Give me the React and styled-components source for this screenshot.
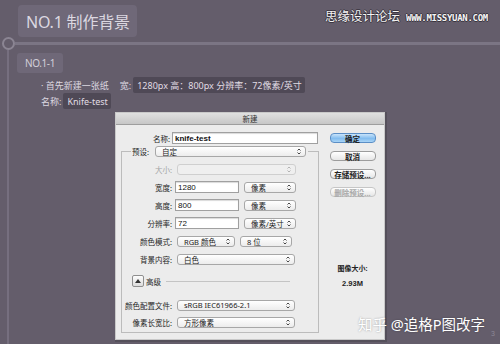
import React from 'react'
import styled, { createGlobalStyle } from 'styled-components'

const GlobalStyle = createGlobalStyle`
    html, body {
        margin: 0;
        padding: 0;
        background: #645d6b;
    }
    * {
        box-sizing: border-box;
    }
`

const CJK = `"Noto Sans", "Noto Sans CJK SC", sans-serif`

function Arrows() {
    return (
        <svg width="4" height="7" viewBox="0 0 4 7">
            <path d="M0.5 2.5 L2 1 L3.5 2.5" fill="none" stroke="#333" strokeWidth="0.9" />
            <path d="M0.5 4.5 L2 6 L3.5 4.5" fill="none" stroke="#333" strokeWidth="0.9" />
        </svg>
    )
}

function Select({ width, disabled, children }) {
    return (
        <SelectBox $width={width} $disabled={disabled}>
            <span>{children}</span>
            <Arrows />
        </SelectBox>
    )
}

function Row({ label, disabled, children }) {
    return (
        <FieldRow>
            <Label $disabled={disabled}>{label}</Label>
            {children}
        </FieldRow>
    )
}

function App() {
    return (
        <Page>
            <GlobalStyle />
            <Header>
                <TitleBox>NO.1&nbsp;制作背景</TitleBox>
                <SiteMark>
                    <span>思缘设计论坛</span>
                    <small>WWW.MISSYUAN.COM</small>
                </SiteMark>
            </Header>
            <Timeline>
                <Dot />
                <TimeLine />
            </Timeline>
            <Section>
                <SubBox>NO.1-1</SubBox>
                <TextLine>
                    · 首先新建一张纸<Key>宽:</Key>
                    <Chip>1280px 高：800px 分辨率：72像素/英寸</Chip>
                </TextLine>
                <TextLine>
                    名称:<Chip>Knife-test</Chip>
                </TextLine>

                <Dialog>
                    <TitleBar>新建</TitleBar>
                    <DialogBody>
                        <LeftCol>
                            <NameRow>
                                <NameLabel>名称:</NameLabel>
                                <Input $width={146} $bold>knife-test</Input>
                            </NameRow>
                            <FieldSet>
                                <Legend>
                                    <LegendLabel>预设:</LegendLabel>
                                    <Select width={151}>自定</Select>
                                </Legend>
                                <Rows>
                                    <Row label="大小:" disabled>
                                        <Select width={119} disabled></Select>
                                    </Row>
                                    <Row label="宽度:">
                                        <Input $width={64}>1280</Input>
                                        <Select width={52}>像素</Select>
                                    </Row>
                                    <Row label="高度:">
                                        <Input $width={64}>800</Input>
                                        <Select width={52}>像素</Select>
                                    </Row>
                                    <Row label="分辨率:">
                                        <Input $width={64}>72</Input>
                                        <Select width={52}>像素/英寸</Select>
                                    </Row>
                                    <Row label="颜色模式:">
                                        <Select width={58}>RGB 颜色</Select>
                                        <Select width={52}>8 位</Select>
                                    </Row>
                                    <Row label="背景内容:">
                                        <Select width={118}>白色</Select>
                                    </Row>
                                </Rows>
                                <Advanced>
                                    <Toggle>
                                        <svg width="6" height="4" viewBox="0 0 6 4">
                                            <path d="M0 4 L3 0 L6 4 Z" fill="#333" />
                                        </svg>
                                    </Toggle>
                                    <span>高级</span>
                                    <Rule />
                                </Advanced>
                                <Rows $gap={5}>
                                    <Row label="颜色配置文件:">
                                        <Select width={118}>sRGB IEC61966-2.1</Select>
                                    </Row>
                                    <Row label="像素长宽比:">
                                        <Select width={118}>方形像素</Select>
                                    </Row>
                                </Rows>
                            </FieldSet>
                        </LeftCol>
                        <RightCol>
                            <Button $primary>确定</Button>
                            <Button>取消</Button>
                            <Button>存储预设...</Button>
                            <Button $disabled>删除预设...</Button>
                            <SizeInfo>
                                <div>图像大小:</div>
                                <strong>2.93M</strong>
                            </SizeInfo>
                        </RightCol>
                    </DialogBody>
                </Dialog>
            </Section>
            <Credit>知乎 @追格P图改字</Credit>
            <PageNo>3</PageNo>
        </Page>
    )
}

export default App

const Page = styled.div`
    position: relative;
    width: 500px;
    height: 344px;
    overflow: hidden;
    background: #645d6b;
    font-family: ${CJK};
    display: flex;
    flex-direction: column;
`;
const Header = styled.div`
    display: flex;
    padding: 5px 0 0 18px;
    height: 37px;
`;
const TitleBox = styled.div`
    height: 32px;
    padding: 0 7px 0 8px;
    display: flex;
    align-items: center;
    background: #6f6878;
    border-radius: 4px;
    color: #dcd8e1;
    font-size: 16px;
    letter-spacing: -0.2px;
`;
const SiteMark = styled.div`
    position: absolute;
    top: 6px;
    left: 325px;
    display: flex;
    align-items: baseline;
    gap: 6px;
    color: #f4f4f4;
    text-shadow: 1px 0 0 #3a3540, -1px 0 0 #3a3540, 0 1px 0 #3a3540, 0 -1px 0 #3a3540;
    > span {
        font-size: 12.5px;
        font-family: ${CJK};
    }
    > small {
        font-family: "DejaVu Sans Mono", monospace;
        font-size: 9px;
        font-weight: bold;
        letter-spacing: -0.3px;
    }
`;
const Timeline = styled.div`
    display: flex;
    align-items: center;
    height: 13px;
    padding-left: 2px;
`;
const Dot = styled.div`
    width: 13px;
    height: 13px;
    border: 2px solid #8b8593;
    border-radius: 50%;
    flex: none;
`;
const TimeLine = styled.div`
    flex: 1;
    height: 3px;
    background: #7b7584;
`;
const Section = styled.div`
    flex: 1;
    margin-left: 7px;
    border-left: 2px solid #766f7f;
    padding: 3px 0 0 8px;
    display: flex;
    flex-direction: column;
    align-items: flex-start;
`;
const SubBox = styled.div`
    height: 20px;
    width: 46px;
    display: flex;
    align-items: center;
    justify-content: center;
    background: #6f6878;
    border-radius: 3px;
    color: #d3cfd8;
    font-size: 10px;
    letter-spacing: -0.4px;
    margin-bottom: 4px;
`;
const TextLine = styled.div`
    display: flex;
    align-items: center;
    padding-left: 24px;
    font-size: 9px;
    color: #dcd8e0;
    white-space: pre;
`;
const Key = styled.span`
    margin-left: 11px;
`;
const Chip = styled.span`
    display: inline-flex;
    align-items: center;
    height: 16px;
    margin-left: 2px;
    padding: 0 3px 0 4px;
    background: #4f4956;
    border-radius: 2px;
    color: #e0dce4;
`;
const Dialog = styled.div`
    margin: 3px 0 0 98px;
    width: 270px;
    height: 228px;
    background: #ececec;
    border: 1px solid #c9c9c9;
    box-shadow: 1px 1px 0 1px #55505b;
    display: flex;
    flex-direction: column;
    font-size: 7.5px;
    color: #262626;
`;
const TitleBar = styled.div`
    height: 12px;
    flex: none;
    display: flex;
    align-items: center;
    justify-content: center;
    background: linear-gradient(#e0e0e0, #c7c7c7);
    border-bottom: 1px solid #9e9e9e;
    font-size: 7.5px;
    color: #333;
`;
const DialogBody = styled.div`
    flex: 1;
    display: flex;
    padding: 0 0 5px 5px;
`;
const LeftCol = styled.div`
    width: 198px;
    display: flex;
    flex-direction: column;
`;
const NameRow = styled.div`
    display: flex;
    align-items: center;
    gap: 2px;
    height: 12px;
    margin-top: 7px;
`;
const NameLabel = styled.div`
    width: 49px;
    text-align: right;
`;
const Input = styled.div`
    width: ${p => p.$width}px;
    height: 12px;
    background: #fff;
    border: 1px solid #a0a0a0;
    box-shadow: inset 0 1px 1px rgba(0, 0, 0, 0.15);
    padding-left: 2px;
    display: flex;
    align-items: center;
    font-size: 8px;
    font-weight: ${p => (p.$bold ? 700 : 400)};
    font-family: "Liberation Sans", sans-serif;
    color: #111;
`;
const FieldSet = styled.fieldset`
    margin: 2px 0 0 0;
    padding: 0 0 4px 0;
    border: 1px solid #bcbcbc;
    min-width: 0;
`;
const Legend = styled.legend`
    display: flex;
    align-items: center;
    gap: 2px;
    margin-left: 9px;
    padding: 0 2px 0 1px;
`;
const LegendLabel = styled.span`
    width: 19px;
`;
const Rows = styled.div`
    display: flex;
    flex-direction: column;
    gap: ${p => p.$gap ?? 6}px;
    margin-top: ${p => (p.$gap ? 12 : 6)}px;
`;
const FieldRow = styled.div`
    display: flex;
    align-items: center;
    gap: 3px;
    height: 12px;
`;
const Label = styled.div`
    width: 50px;
    text-align: right;
    white-space: nowrap;
    color: ${p => (p.$disabled ? '#a5a5a5' : '#262626')};
`;
const SelectBox = styled.div`
    width: ${p => p.$width}px;
    height: 11px;
    display: flex;
    align-items: center;
    justify-content: space-between;
    padding: 0 4px 0 6px;
    border: 1px solid ${p => (p.$disabled ? '#cfcfcf' : '#a7a7a7')};
    border-radius: 3px;
    background: ${p => (p.$disabled ? '#efefef' : 'linear-gradient(#ffffff, #ececec)')};
    color: #222;
    white-space: nowrap;
    margin-left: 2px;
    svg {
        opacity: ${p => (p.$disabled ? 0.35 : 1)};
    }
`;
const Advanced = styled.div`
    display: flex;
    align-items: center;
    height: 12px;
    margin: 10px 0 0 10px;
    gap: 2px;
    color: #262626;
`;
const Toggle = styled.div`
    width: 12px;
    height: 12px;
    display: flex;
    align-items: center;
    justify-content: center;
    border: 1px solid #8f8f8f;
    border-radius: 2px;
    background: linear-gradient(#fdfdfd, #dcdcdc);
`;
const Rule = styled.div`
    flex: 1;
    height: 1px;
    background: #c4c4c4;
    margin: 0 28px 0 3px;
`;
const RightCol = styled.div`
    flex: 1;
    display: flex;
    flex-direction: column;
    align-items: center;
    gap: 8px;
    padding: 8px 0 0 2px;
`;
const Button = styled.div`
    width: 46px;
    height: 10px;
    display: flex;
    align-items: center;
    justify-content: center;
    border-radius: 4px;
    font-size: 7.5px;
    font-weight: 700;
    border: 1px solid ${p => (p.$primary ? '#5c8fc6' : p.$disabled ? '#c6c6c6' : '#9c9c9c')};
    background: ${p =>
        p.$primary
            ? 'linear-gradient(#c9e4fb, #83bdef 55%, #a9d4f6)'
            : 'linear-gradient(#ffffff, #e6e6e6)'};
    color: ${p => (p.$disabled ? '#a8a8a8' : '#222')};
`;
const SizeInfo = styled.div`
    margin-top: 58px;
    display: flex;
    flex-direction: column;
    align-items: center;
    gap: 6px;
    font-weight: 700;
    font-size: 7px;
    color: #222;
    > strong {
        font-size: 7.5px;
        font-family: "Liberation Sans", sans-serif;
    }
`;
const Credit = styled.div`
    position: absolute;
    left: 358px;
    top: 313px;
    font-size: 14.5px;
    color: #ffffff;
    text-shadow: 0 0 2px rgba(0, 0, 0, 0.35);
    white-space: nowrap;
`;
const PageNo = styled.div`
    position: absolute;
    left: 491px;
    top: 330px;
    font-size: 7px;
    color: #8d8896;
    font-family: "Liberation Sans", sans-serif;
`;
